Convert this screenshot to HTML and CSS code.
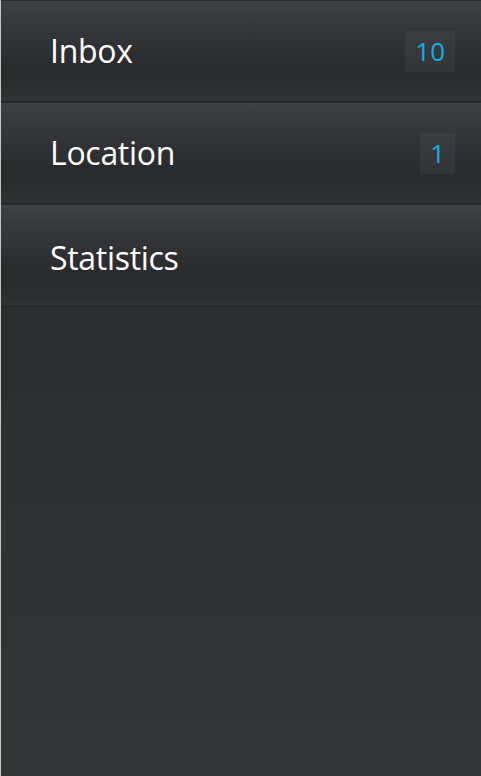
FILE: index.html
```html
<!DOCTYPE html>
<html>
<head>
<meta charset="utf-8">
<link rel="stylesheet" href="styles.css">
</head>
<body>
<nav class="menu">
  <div class="item"><span class="label">Inbox</span><span class="badge">10</span></div>
  <div class="item"><span class="label">Location</span><span class="badge">1</span></div>
  <div class="item item-last"><span class="label">Statistics</span></div>
</nav>
</body>
</html>
```
FILE: styles.css
```css
html, body {
  margin: 0;
  padding: 0;
  height: 100%;
}
body {
  font-family: "Open Sans", "Noto Sans", sans-serif;
  background: linear-gradient(to bottom, #2a2b2d 0%, #2c2d2f 40%, #343537 100%);
  border-left: 1px solid #c4c4c4;
  box-sizing: border-box;
  overflow: hidden;
}
.menu {
  display: flex;
  flex-direction: column;
}
.item {
  height: 100px;
  border-top: 1px solid #2b2c2e;
  border-bottom: 1px solid #232426;
  display: flex;
  align-items: center;
  justify-content: space-between;
  padding: 0 26px 0 49px;
  background: linear-gradient(to bottom, #3f4043 0%, #36373a 25%, #2a2b2d 65%, #2c2d2f 85%, #313234 100%);
}
.item-last {
  padding-top: 4px;
  height: 97px;
  box-sizing: content-box;
}
.label {
  color: #ffffff;
  font-size: 32px;
  letter-spacing: -0.3px;
  line-height: 1;
}
.badge {
  height: 41px;
  padding: 0 10px;
  display: flex;
  align-items: center;
  color: #17ade6;
  font-size: 26px;
  background: linear-gradient(to bottom, #3c3d40 0%, #323335 100%);
}
```
